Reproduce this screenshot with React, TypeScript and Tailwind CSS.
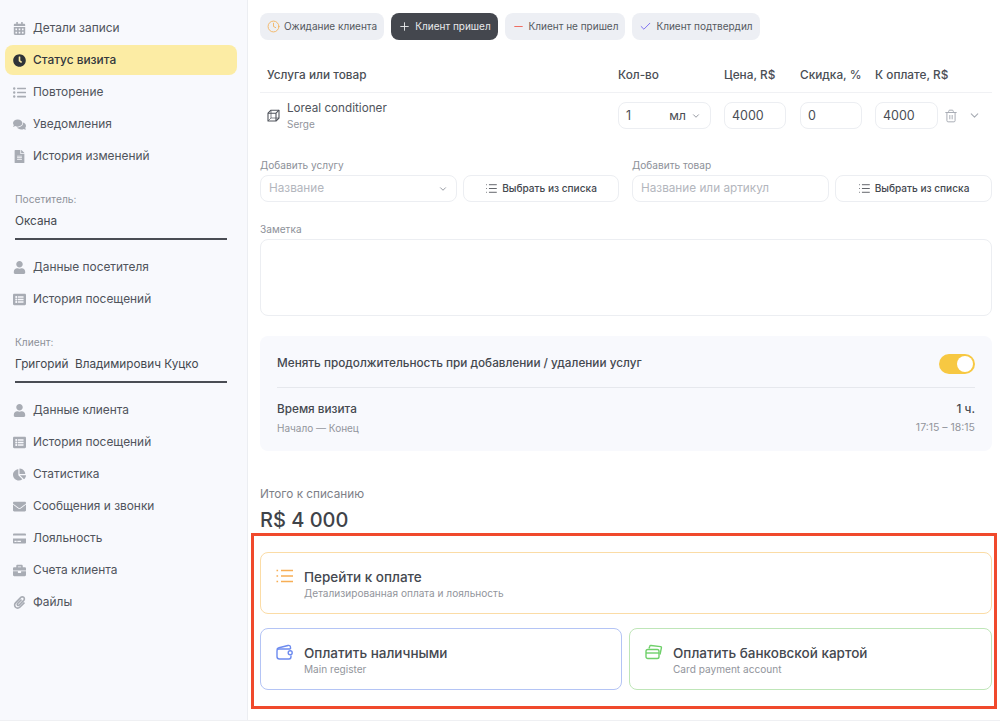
import React from "react";
import {
  FaCalendarAlt, FaClock, FaListUl, FaComments, FaFileAlt, FaUser, FaListAlt,
  FaChartPie, FaEnvelope, FaCreditCard, FaBriefcase, FaPaperclip,
} from "react-icons/fa";
import { Clock, Plus, Minus, Check, ChevronDown, Trash2, List } from "lucide-react";

function NavItem({ icon: Icon, label, active }: { icon: React.ComponentType<{ className?: string }>; label: string; active?: boolean }) {
  return (
    <div className={`h-[30px] mb-[2px] mx-[5px] w-[232px] rounded-lg flex items-center ${active ? "bg-[#fcecA4] text-[#33373d] font-medium" : "text-[#50545c]"}`}>
      <span className="w-[28px] flex justify-center shrink-0 pl-[1px]">
        <Icon className={`text-[13px] ${active ? "text-[#2f3338]" : "text-[#a8acb4]"}`} />
      </span>
      <span className="text-[11.9px] leading-none">{label}</span>
    </div>
  );
}

function Person({ caption, name, className }: { caption: string; name: string; className: string }) {
  return (
    <div className={`mx-[15px] w-[212px] ${className}`}>
      <div className="text-[10.2px] leading-[14px] text-[#8d9199]">{caption}</div>
      <div className="text-[11.75px] leading-[16px] mt-[7px] text-[#44484f] whitespace-pre">{name}</div>
      <div className="h-[2px] bg-[#4a4d54] mt-[9px]" />
    </div>
  );
}

function StatusButton({ icon, label, dark, w }: { icon: React.ReactNode; label: string; dark?: boolean; w: string }) {
  return (
    <div className={`h-[27px] ${w} rounded-lg flex items-center justify-center gap-[4px] text-[10px] whitespace-nowrap ${dark ? "bg-[#44474e] text-[#e9eaec]" : "bg-[#edeff4] text-[#55595f]"}`}>
      {icon}
      <span>{label}</span>
    </div>
  );
}

function Field({ children, className }: { children: React.ReactNode; className: string }) {
  return (
    <div className={`h-[27px] border border-[#eceef2] rounded-lg flex items-center bg-white text-[12.5px] text-[#4a4e55] ${className}`}>
      {children}
    </div>
  );
}

function PickButton({ className }: { className: string }) {
  return (
    <Field className={`justify-center gap-[4px] ${className}`}>
      <List className="w-[13px] h-[13px] text-[#4a4e55]" strokeWidth={1.6} />
      <span className="text-[10.1px] font-medium text-[#44484f]">Выбрать из списка</span>
    </Field>
  );
}

function CubeIcon() {
  return (
    <svg width="13" height="13" viewBox="0 0 13 13" fill="none" stroke="#50545c" strokeWidth="1.1" strokeLinejoin="round" className="shrink-0">
      <path d="M1 4.2 L4 1.2 H12 V9 L9 12 H1 Z" />
      <path d="M1 4.2 H9 V12 M9 4.2 L12 1.2" />
      <path d="M4 1.2 V9 H12 M4 9 L1 12" strokeWidth="0.7" />
    </svg>
  );
}

function CardsIcon() {
  return (
    <svg width="18" height="16" viewBox="0 0 18 16" fill="none" stroke="#6fd06a" strokeWidth="1.4" strokeLinejoin="round">
      <path d="M4 4.5 L4.8 2.2 Q5 1.4 6 1.5 L15.6 2.6 Q16.6 2.8 16.4 3.8 L15 10.5" />
      <rect x="1" y="5.5" width="13" height="9" rx="1.8" />
      <path d="M1 9h13" />
    </svg>
  );
}

function WalletIcon() {
  return (
    <svg width="17" height="16" viewBox="0 0 17 16" fill="none" stroke="#6d8bef" strokeWidth="1.4" strokeLinejoin="round">
      <path d="M14.5 5 V3.5 Q14.5 1 12 1.5 L3 3.7 Q1 4.2 1 5.5" />
      <path d="M14.5 5 H3 Q1 5 1 7 V12.5 Q1 15 3.5 15 H13 Q15 15 15 12.5 V11.5" />
      <circle cx="14.2" cy="8.8" r="2" />
    </svg>
  );
}

function OrangeList() {
  return (
    <svg width="17" height="14" viewBox="0 0 17 14" fill="none" stroke="#f7ae55" strokeWidth="1.3">
      <path d="M5 1.5h12M5 7h12M5 12.5h12" />
      <path d="M0.5 1.5h1.6M0.5 7h1.6M0.5 12.5h1.6" />
    </svg>
  );
}

function PayCard({ icon, title, sub, border, className }: { icon: React.ReactNode; title: string; sub: string; border: string; className: string }) {
  return (
    <div className={`h-[62px] border rounded-lg flex items-center bg-white ${border} ${className}`}>
      <span className="w-[43px] pl-[15px] mb-[14px] flex shrink-0">{icon}</span>
      <div className="pt-[2px]">
        <div className="text-[13.5px] leading-[18px] font-medium text-[#44484f] whitespace-nowrap">{title}</div>
        <div className="text-[10.1px] leading-[14px] text-[#92959c] whitespace-nowrap">{sub}</div>
      </div>
    </div>
  );
}

export default function App() {
  return (
    <div className="w-[1000px] h-[726px] overflow-hidden bg-white flex flex-col" style={{ fontFamily: "Inter, 'Noto Sans', sans-serif" }}>
      <div className="flex h-[721px] border-b border-[#eff0f3]">
        <aside className="w-[248px] shrink-0 bg-[#f8f9fd] border-r border-[#eceef2] pt-[13px]">
          <NavItem icon={FaCalendarAlt} label="Детали записи" />
          <NavItem icon={FaClock} label="Статус визита" active />
          <NavItem icon={FaListUl} label="Повторение" />
          <NavItem icon={FaComments} label="Уведомления" />
          <NavItem icon={FaFileAlt} label="История изменений" />
          <Person caption="Посетитель:" name="Оксана" className="mt-[21px] mb-[12px]" />
          <NavItem icon={FaUser} label="Данные посетителя" />
          <NavItem icon={FaListAlt} label="История посещений" />
          <Person caption="Клиент:" name="Григорий  Владимирович Куцко" className="mt-[21px] mb-[12px]" />
          <NavItem icon={FaUser} label="Данные клиента" />
          <NavItem icon={FaListAlt} label="История посещений" />
          <NavItem icon={FaChartPie} label="Статистика" />
          <NavItem icon={FaEnvelope} label="Сообщения и звонки" />
          <NavItem icon={FaCreditCard} label="Лояльность" />
          <NavItem icon={FaBriefcase} label="Счета клиента" />
          <NavItem icon={FaPaperclip} label="Файлы" />
        </aside>

        <main className="flex-1 pl-[12px] pr-[8px] pt-[13px] min-w-0">
          <div className="flex gap-[7px]">
            <StatusButton w="w-[124px]" label="Ожидание клиента" icon={<Clock className="w-[13px] h-[13px] text-[#f3b562]" strokeWidth={1.7} />} />
            <StatusButton w="w-[107px]" dark label="Клиент пришел" icon={<Plus className="w-[13px] h-[13px] text-[#e9eaec]" strokeWidth={1.7} />} />
            <StatusButton w="w-[120px]" label="Клиент не пришел" icon={<Minus className="w-[13px] h-[13px] text-[#ef6a5f]" strokeWidth={1.8} />} />
            <StatusButton w="w-[128px]" label="Клиент подтвердил" icon={<Check className="w-[13px] h-[13px] text-[#7b6ef0]" strokeWidth={1.8} />} />
          </div>

          <div className="flex items-center h-[25px] pt-[1px] mt-[22px] text-[11.8px] font-medium text-[#4a4e55] border-b border-[#f0f1f4] pb-[4px] box-content">
            <span className="w-[358px] pl-[7px]">Услуга или товар</span>
            <span className="w-[106px]">Кол-во</span>
            <span className="w-[76px]">Цена, R$</span>
            <span className="w-[75px]">Скидка, %</span>
            <span>К оплате, R$</span>
          </div>

          <div className="flex items-center h-[27px] mt-[9px]">
            <div className="w-[358px] flex items-center pl-[7px]">
              <CubeIcon />
              <div className="ml-[7px]">
                <div className="text-[11.7px] leading-[16px] text-[#50545c]">Loreal conditioner</div>
                <div className="text-[10px] leading-[14px] mt-[1px] text-[#92959c]">Serge</div>
              </div>
            </div>
            <Field className="w-[93px] pl-[7px] pr-[9px] pt-[1px] justify-between">
              <span>1</span>
              <span className="flex items-center gap-[5px]">мл <ChevronDown className="w-[10px] h-[10px] text-[#8d9199]" strokeWidth={2.2} /></span>
            </Field>
            <Field className="w-[62px] ml-[13px] pl-[7px] pt-[1px]">4000</Field>
            <Field className="w-[62px] ml-[14px] pl-[7px] pt-[1px]">0</Field>
            <Field className="w-[63px] ml-[13px] pl-[7px] pt-[1px]">4000</Field>
            <Trash2 className="w-[14px] h-[14px] ml-[6px] text-[#a8acb4]" strokeWidth={1.7} />
            <ChevronDown className="w-[13px] h-[13px] ml-[10px] text-[#a8acb4]" strokeWidth={2} />
          </div>

          <div className="flex mt-[29px] gap-[13px]">
            <div>
              <div className="text-[10.1px] leading-[14px] text-[#8d9199] mb-[3px]">Добавить услугу</div>
              <div className="flex gap-[6px]">
                <Field className="w-[197px] px-[8px] justify-between">
                  <span className="text-[#b3b6bd] text-[11.75px]">Название</span>
                  <ChevronDown className="w-[10px] h-[10px] text-[#8d9199]" strokeWidth={2.2} />
                </Field>
                <PickButton className="w-[156px]" />
              </div>
            </div>
            <div>
              <div className="text-[10.1px] leading-[14px] text-[#8d9199] mb-[3px]">Добавить товар</div>
              <div className="flex gap-[6px]">
                <Field className="w-[197px] px-[8px]">
                  <span className="text-[#b3b6bd] text-[11.75px]">Название или артикул</span>
                </Field>
                <PickButton className="w-[157px]" />
              </div>
            </div>
          </div>

          <div className="text-[10.1px] leading-[14px] text-[#8d9199] mt-[20px] mb-[3px]">Заметка</div>
          <div className="h-[77px] border border-[#eceef2] rounded-lg" />

          <div className="mt-[20px] h-[115px] bg-[#f8f9fd] rounded-lg px-[17px]">
            <div className="h-[52px] pt-[4px] flex items-center justify-between border-b border-[#e6e8ed]">
              <span className="text-[11.75px] font-medium text-[#44484f]">Менять продолжительность при добавлении / удалении услуг</span>
              <span className="w-[36px] h-[20px] rounded-full bg-[#f7c842] flex items-center justify-end pr-[2px]">
                <span className="w-[16px] h-[16px] rounded-full bg-white" />
              </span>
            </div>
            <div className="flex justify-between mt-[13px]">
              <div>
                <div className="text-[11.75px] leading-[16px] font-medium text-[#44484f]">Время визита</div>
                <div className="text-[10px] leading-[14px] mt-[4px] text-[#92959c]">Начало — Конец</div>
              </div>
              <div className="text-right">
                <div className="text-[11.75px] leading-[16px] font-medium text-[#44484f]">1 ч.</div>
                <div className="text-[10.5px] leading-[14px] mt-[4px] text-[#92959c]">17:15 – 18:15</div>
              </div>
            </div>
          </div>

          <div className="text-[11.75px] leading-[16px] text-[#7d8087] mt-[35px]">Итого к списанию</div>
          <div className="text-[20px] leading-[26px] font-medium text-[#3f4349] mt-[5px]">R$ 4 000</div>

          <div className="ml-[-9px] mr-[-5px] h-[176px] border-[3px] border-[#f0492c] pl-[6px] pr-[2px] pt-[16px]">
            <PayCard
              className=""
              border="border-[#fbdca6]"
              title="Перейти к оплате"
              sub="Детализированная оплата и лояльность"
              icon={<OrangeList />}
            />
            <div className="flex gap-[7px] mt-[14px]">
              <PayCard
                className="w-[362px]"
                border="border-[#b4c4f5]"
                title="Оплатить наличными"
                sub="Main register"
                icon={<WalletIcon />}
              />
              <PayCard
                className="flex-1"
                border="border-[#bfe6b8]"
                title="Оплатить банковской картой"
                sub="Card payment account"
                icon={<CardsIcon />}
              />
            </div>
          </div>
        </main>
      </div>
    </div>
  );
}
